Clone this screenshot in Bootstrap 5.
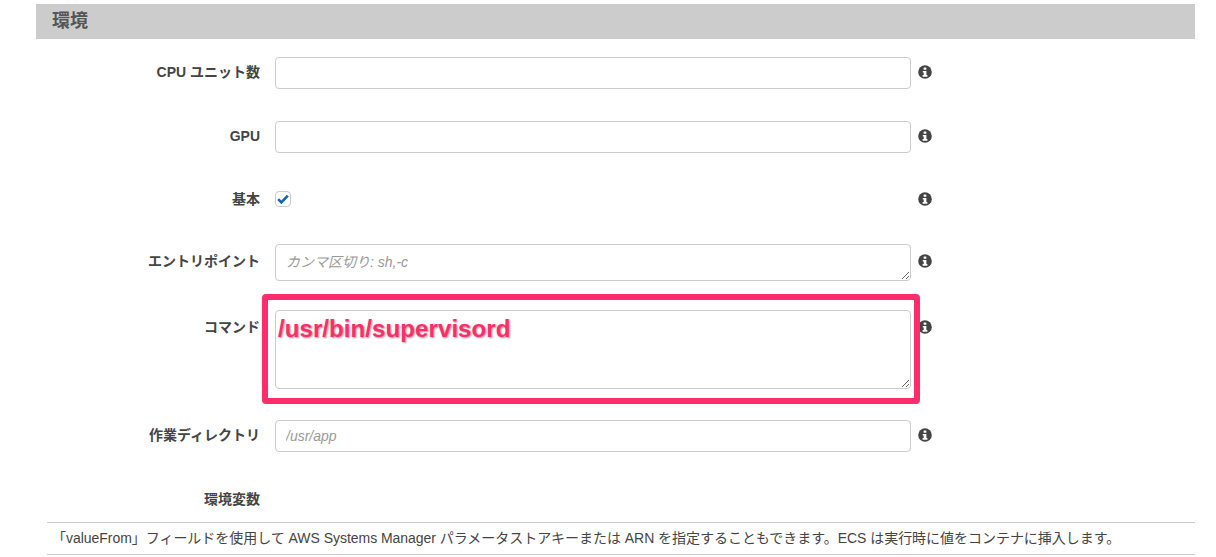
<!doctype html>
<html lang="ja">
<head>
<meta charset="utf-8">
<title>環境</title>
<link href="https://cdn.jsdelivr.net/npm/bootstrap@5.3.0/dist/css/bootstrap.min.css" rel="stylesheet">
<style>
html,body{height:557px;overflow:hidden;background:#fff}
body{font-family:"Liberation Sans","Noto Sans CJK JP",sans-serif;font-size:14px;color:#444;padding:4px 21px 0 36px}
.env-head{height:35px;background:#ccc;color:#555;font-size:18px;font-weight:700;line-height:35px;padding-left:16px}
.env-form{position:relative;padding-top:18px}
.env-row{display:flex;align-items:flex-start}
.env-label{width:224px;margin:0;text-align:right;font-weight:700;font-size:14px;color:#444;line-height:31px;flex:none}
.env-ctl{width:636px;margin-left:15px;flex:none}
.env-ctl .form-control{font-size:14px;border:1px solid #ccc;border-radius:4px;padding:6px 10px;box-shadow:none;color:#444}
.env-ctl input.form-control{height:32px}
.env-ctl .form-control::placeholder{color:#999;font-style:italic}
.env-tip{width:14px;height:14px;margin:8px 0 0 7px;flex:none;display:block}
.r1{height:64px}.r2{height:70px}.r3{height:53px}.r4{height:66px}.r5{height:110px}.r6{height:65px}
.r3 .env-label{line-height:16px;margin-top:0}
.r3 .env-check{width:16px;height:16px;margin:0;border:1px solid #ccc;border-radius:4px;background:#fff;display:flex;align-items:center;justify-content:center}
.r3 .env-tip{margin-top:1px}
.r4 textarea{height:37px;resize:vertical;padding-top:7px!important}
.r4 .env-label{line-height:35px}
.r4 .env-tip{margin-top:10px}
.r5 .env-label{line-height:34px}
.r5 textarea{height:79px;color:#ff2d6b!important;font-size:24.2px!important;font-weight:700;line-height:28px;padding:4px 2px!important;text-shadow:1px 1px 2px rgba(0,0,0,.4);resize:vertical}
.r5 .env-tip{margin-top:10px}
.r7{height:37px}
.r7 .env-label{line-height:29px}
.mark-box{position:absolute;left:226px;top:255px;width:658px;height:110px;border:6.5px solid #ff2d6b;border-radius:4px;pointer-events:none}
.env-note{margin-left:11px;border-top:1px solid #ccc;border-bottom:1px solid #ccc;height:33px;line-height:30px;font-size:14px;letter-spacing:-.035px;color:#444;padding-left:5px;white-space:nowrap}
</style>
</head>
<body>
<svg width="0" height="0" class="d-block position-absolute"><defs>
<symbol id="tip" viewBox="0 0 14 14"><circle cx="7" cy="7" r="6.8" fill="#444"/><rect x="5.6" y="2.4" width="2.8" height="2.4" rx=".6" fill="#fff"/><path d="M4.8 6h3.6v4h1v1.7H4.6V10h1.1V7.6h-.9z" fill="#fff"/></symbol>
</defs></svg>
<div class="env-head">環境</div>
<form class="env-form">
  <div class="env-row r1"><label class="env-label">CPU ユニット数</label><div class="env-ctl"><input class="form-control" type="text"></div><svg class="env-tip"><use href="#tip"/></svg></div>
  <div class="env-row r2"><label class="env-label">GPU</label><div class="env-ctl"><input class="form-control" type="text"></div><svg class="env-tip"><use href="#tip"/></svg></div>
  <div class="env-row r3"><label class="env-label">基本</label><div class="env-ctl"><span class="env-check"><svg width="12" height="10" viewBox="0 0 12 10"><path d="M1.2 5.2 4.4 8.4 10.8 1.6" fill="none" stroke="#1166bb" stroke-width="2.6"/></svg></span></div><svg class="env-tip"><use href="#tip"/></svg></div>
  <div class="env-row r4"><label class="env-label">エントリポイント</label><div class="env-ctl"><textarea class="form-control" placeholder="カンマ区切り: sh,-c"></textarea></div><svg class="env-tip"><use href="#tip"/></svg></div>
  <div class="env-row r5"><label class="env-label">コマンド</label><div class="env-ctl"><textarea class="form-control">/usr/bin/supervisord</textarea></div><svg class="env-tip"><use href="#tip"/></svg></div>
  <div class="env-row r6"><label class="env-label">作業ディレクトリ</label><div class="env-ctl"><input class="form-control" type="text" placeholder="/usr/app"></div><svg class="env-tip"><use href="#tip"/></svg></div>
  <div class="env-row r7"><label class="env-label">環境変数</label></div>
  <div class="env-note">「valueFrom」フィールドを使用して AWS Systems Manager パラメータストアキーまたは ARN を指定することもできます。ECS は実行時に値をコンテナに挿入します。</div>
  <div class="mark-box"></div>
</form>
<script src="https://cdn.jsdelivr.net/npm/bootstrap@5.3.0/dist/js/bootstrap.bundle.min.js"></script>
</body>
</html>
